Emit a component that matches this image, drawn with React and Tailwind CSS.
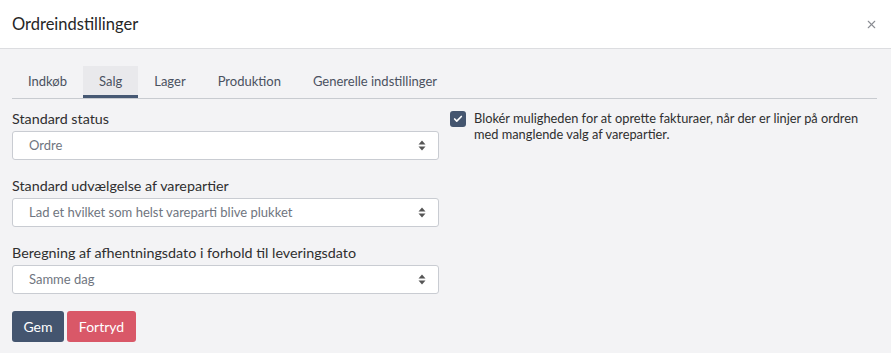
import React from 'react';
import { X, Check } from 'lucide-react';

const tabs = ['Indkøb', 'Salg', 'Lager', 'Produktion', 'Generelle indstillinger'];

function SelectBox({ value }) {
  return (
    <div className="relative flex items-center h-[29px] bg-white border border-[#c9ccd2] rounded-[3px] pl-4 pr-3">
      <span className="text-[13px] text-[#6f7580] flex-1">{value}</span>
      <svg width="8" height="11" viewBox="0 0 8 11" className="text-[#555]">
        <path d="M4 0.5 L7.5 4.5 H0.5 Z" fill="currentColor" />
        <path d="M4 10.5 L7.5 6.5 H0.5 Z" fill="currentColor" />
      </svg>
    </div>
  );
}

function Field({ label, value }) {
  return (
    <div className="flex flex-col">
      <label className="text-[14.3px] leading-5 text-[#2f2f2f] mb-[2px]">{label}</label>
      <SelectBox value={value} />
    </div>
  );
}

export default function App() {
  return (
    <div className="w-[891px] h-[353px] bg-[#f3f3f5] font-['Lato',sans-serif] overflow-hidden">
      {/* Modal header */}
      <div className="flex items-center justify-between h-[49px] bg-white border-b border-[#dcdde0] pl-3 pr-[13px]">
        <h1 className="text-[16.5px] text-[#262626]">Ordreindstillinger</h1>
        <X className="w-[13px] h-[13px] text-[#8a8d93]" strokeWidth={2} />
      </div>

      <div className="px-3 pr-[14px]">
        {/* Tabs */}
        <div className="flex pt-[17px] border-b border-[#c8cbd0]">
          {tabs.map((t) => {
            const active = t === 'Salg';
            return (
              <div
                key={t}
                className={`h-[32px] px-4 flex items-center text-[13px] text-[#4a5160] ${active ? 'bg-[#e9e9ec] border-b-[3px] border-[#465873] -mb-[1px] pt-[2px]' : ''}`}
              >
                {t}
              </div>
            );
          })}
        </div>

        {/* Content */}
        <div className="grid grid-cols-[427px_1fr] gap-x-[11px] pt-[10px]">
          <div className="flex flex-col gap-4">
            <Field label="Standard status" value="Ordre" />
            <Field label="Standard udvælgelse af varepartier" value="Lad et hvilket som helst vareparti blive plukket" />
            <Field label="Beregning af afhentningsdato i forhold til leveringsdato" value="Samme dag" />
            <div className="flex gap-[3px] pt-px">
              <button className="h-[31px] w-[52px] rounded-[3px] bg-[#44556f] text-white text-[14px]">Gem</button>
              <button className="h-[31px] w-[69px] rounded-[3px] bg-[#d95868] text-white text-[14px]">Fortryd</button>
            </div>
          </div>

          <div className="flex items-start gap-2 pt-px">
            <div className="w-4 h-4 rounded-[3px] bg-[#44556f] flex items-center justify-center shrink-0 mt-[1px]">
              <Check className="w-[10px] h-[10px] text-white" strokeWidth={4} />
            </div>
            <p className="text-[12.8px] leading-4 text-[#2f2f2f] w-[400px]">
              Blokér muligheden for at oprette fakturaer, når der er linjer på ordren med manglende valg af varepartier.
            </p>
          </div>
        </div>
      </div>
    </div>
  );
}
